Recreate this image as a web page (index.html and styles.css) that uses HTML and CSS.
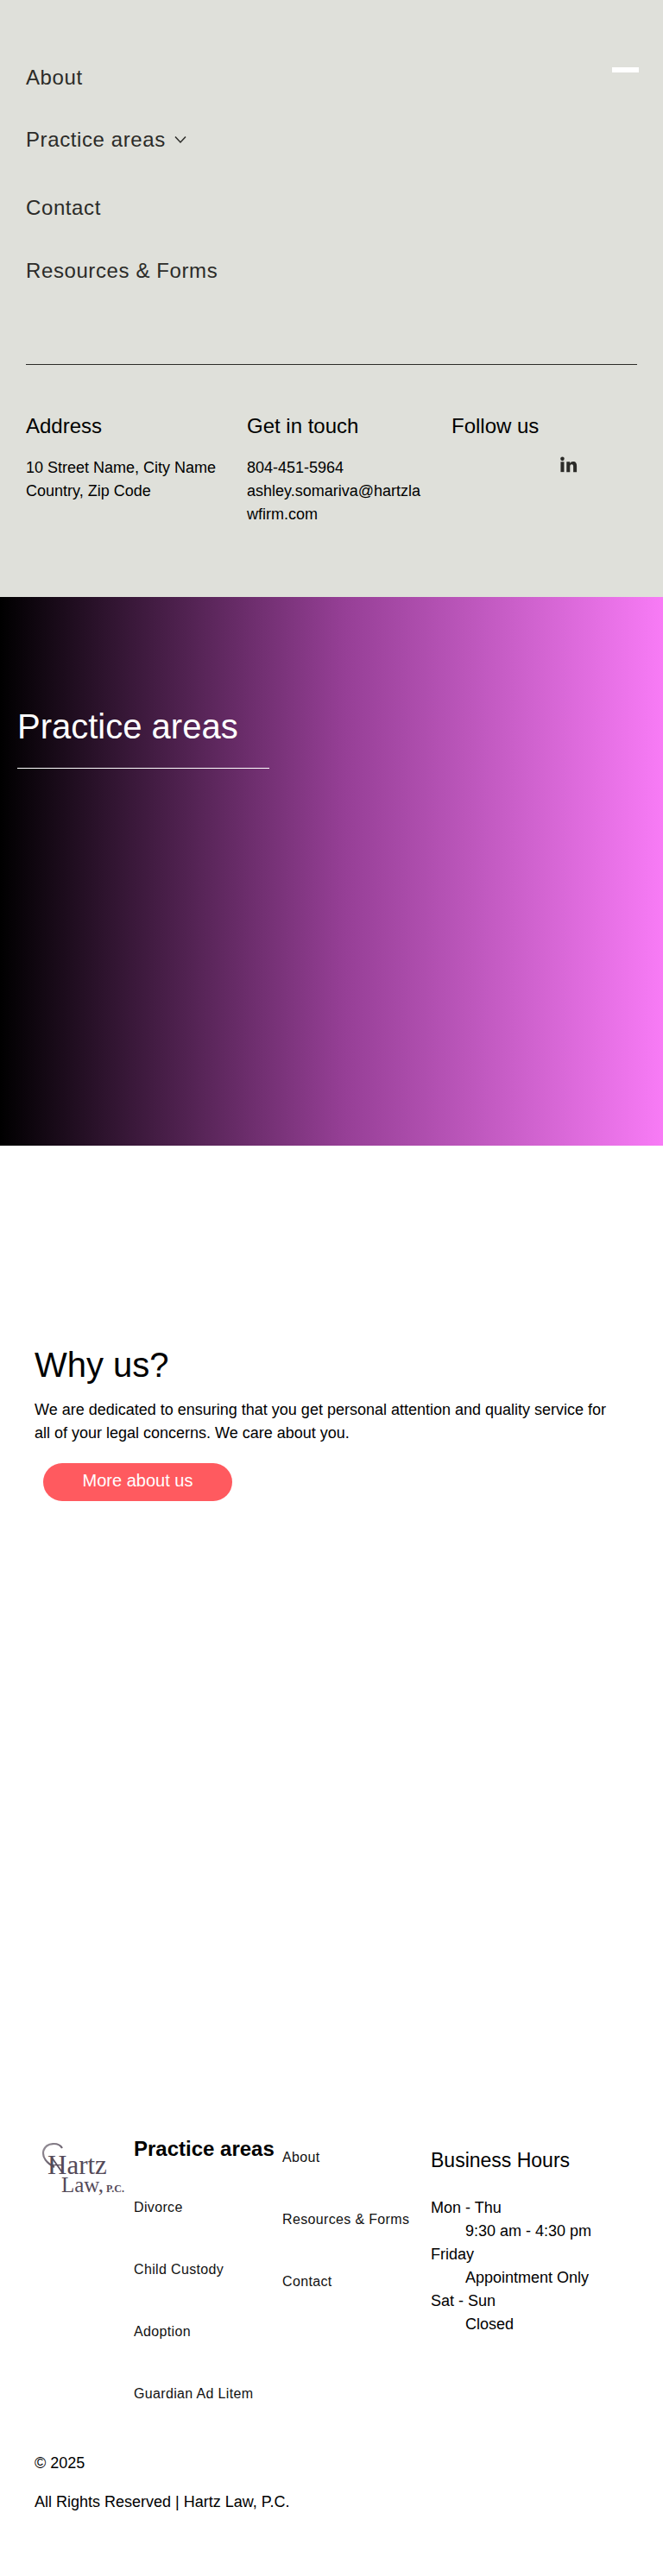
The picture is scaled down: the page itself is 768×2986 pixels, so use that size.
FILE: index.html

```html
<!DOCTYPE html>
<html lang="en">
<head>
<meta charset="UTF-8">
<meta name="viewport" content="width=device-width, initial-scale=1.0">
<title>Hartz Law, P.C.</title>
<link rel="stylesheet" href="styles.css">
</head>
<body>

<section class="menu">
    <div class="menu-close"></div>
    <nav class="menu-links">
        <a class="menu-link" href="#">About</a>
        <a class="menu-link menu-link-sub" href="#">Practice areas
            <svg class="chevron" width="14" height="10" viewBox="0 0 14 10"><path d="M1 1.500 7 8l6-6.500" fill="none" stroke="#2b2b28" stroke-width="1.500"/></svg>
        </a>
        <a class="menu-link" href="#">Contact</a>
        <a class="menu-link" href="#">Resources &amp; Forms</a>
    </nav>
    <div class="menu-info">
        <div class="info-col info-address">
            <h3>Address</h3>
            <p>10 Street Name, City Name<br>Country, Zip Code</p>
        </div>
        <div class="info-col info-touch">
            <h3>Get in touch</h3>
            <p>804-451-5964<br>ashley.somariva@hartzlawfirm.com</p>
        </div>
        <div class="info-col">
            <h3>Follow us</h3>
            <div class="social">
                <svg width="20" height="19" viewBox="0 0 22 20"><circle cx="2.700" cy="2.700" r="2.500" fill="#2b2b28"/><rect x="0.500" y="6.500" width="4.400" height="13" fill="#2b2b28"/><path d="M8 6.500h4.200v1.900c.8-1.400 2.300-2.200 4.100-2.200 3.600 0 4.700 2.300 4.700 5.700v7.600h-4.400v-6.800c0-1.700-.4-2.900-2-2.900-1.700 0-2.200 1.300-2.200 3v6.700H8z" fill="#2b2b28"/></svg>
            </div>
        </div>
    </div>
</section>

<section class="hero">
    <h1>Practice areas</h1>
    <div class="hero-rule"></div>
</section>

<section class="why">
    <h2>Why us?</h2>
    <p>We are dedicated to ensuring that you get personal attention and quality service for all of your legal concerns. We care about you.</p>
    <a class="btn" href="#">More about us</a>
</section>

<footer class="footer">
    <div class="footer-top">
        <svg class="logo" width="100" height="66" viewBox="0 0 100 66">
            <defs>
                <linearGradient id="logoInk" x1="0" y1="0" x2="1" y2="1">
                    <stop offset="0" stop-color="#9a949c"/>
                    <stop offset="1" stop-color="#4a3f50"/>
                </linearGradient>
            </defs>
            <path d="M24 7C20 0 6 0 2.500 9.500 0 18 7 25 15 29" fill="none" stroke="url(#logoInk)" stroke-width="2.200"/>
            <path d="M12 18 24 35" fill="none" stroke="#5a4f60" stroke-width="1.800"/>
            <text class="logo-big" x="7" y="37">Hartz</text>
            <text class="logo-law" x="23" y="58">Law,</text>
            <text class="logo-small" x="75" y="58">P.C.</text>
        </svg>
        <div class="foot-col foot-areas">
            <h4>Practice areas</h4>
            <a href="#">Divorce</a>
            <a href="#">Child Custody</a>
            <a href="#">Adoption</a>
            <a href="#">Guardian Ad Litem</a>
        </div>
        <div class="foot-col foot-pages">
            <a href="#">About</a>
            <a href="#">Resources &amp; Forms</a>
            <a href="#">Contact</a>
        </div>
        <div class="hours">
            <h5>Business Hours</h5>
            <div>Mon - Thu</div>
            <div class="indent">9:30 am - 4:30 pm</div>
            <div>Friday</div>
            <div class="indent">Appointment Only</div>
            <div>Sat - Sun</div>
            <div class="indent">Closed</div>
        </div>
    </div>
    <p class="copy">© 2025</p>
    <p class="copy">All Rights Reserved | Hartz Law, P.C.</p>
</footer>

</body>
</html>
```

FILE: styles.css

```css
* {
    box-sizing: border-box;
}

body {
    margin: 0;
    font-family: "Liberation Sans", Arial, sans-serif;
    color: #000;
    background-color: #fff;
}

a {
    color: inherit;
    text-decoration: none;
}

.menu {
    position: relative;
    height: 692px;
    padding: 72px 30px 0;
    background-color: #dfe0da;
}

.menu-close {
    position: absolute;
    top: 78px;
    left: 709px;
    width: 31px;
    height: 6px;
    background-color: #fff;
}

.menu-links {
    display: flex;
    flex-direction: column;
    height: 351px;
    border-bottom: 1px solid #2b2b28;
}

.menu-link {
    display: flex;
    align-items: center;
    gap: 10px;
    height: 36px;
    margin-bottom: 36px;
    font-size: 24px;
    line-height: 36px;
    letter-spacing: 0.6px;
    color: #2b2b28;
}

.menu-link-sub {
    margin-bottom: 43px;
}

.menu-link-sub + .menu-link {
    margin-bottom: 37px;
}

.menu-info {
    display: flex;
    padding-top: 55px;
}

.info-col {
    flex: 1;
}

.info-address {
    flex: none;
    width: 256px;
}

.info-touch {
    flex: none;
    width: 237px;
    padding-right: 30px;
    overflow-wrap: anywhere;
}

.info-col h3 {
    margin: 0 0 19px;
    font-size: 24px;
    font-weight: 400;
    line-height: 32px;
}

.info-col p {
    margin: 0;
    font-size: 18px;
    line-height: 27px;
}

.social {
    padding-left: 126px;
}

.hero {
    height: 636px;
    padding: 120px 20px 0;
    background: linear-gradient(to right, #000, #963f96 52%, #f87bf6);
    color: #fff;
}

.hero h1 {
    margin: 0;
    font-size: 40px;
    font-weight: 400;
    line-height: 60px;
}

.hero-rule {
    width: 292px;
    height: 1px;
    margin-top: 18px;
    background-color: #fff;
}

.why {
    height: 1104px;
    padding: 229px 40px 0;
}

.why h2 {
    margin: 0 0 14px;
    font-size: 40px;
    font-weight: 400;
    line-height: 50px;
}

.why p {
    max-width: 670px;
    margin: 0 0 21px;
    font-size: 18px;
    line-height: 27px;
}

.btn {
    display: block;
    width: 219px;
    height: 44px;
    margin-left: 10px;
    border-radius: 22px;
    background-color: #ff5a5f;
    color: #fff;
    font-size: 20px;
    line-height: 40px;
    text-align: center;
}

.footer {
    padding: 45px 40px 54px;
}

.footer-top {
    display: flex;
    align-items: flex-start;
    margin-bottom: 5px;
}

.logo {
    flex: none;
    margin: 6px 7px 0 8px;
}

.logo-big {
    font-family: "Liberation Serif", serif;
    font-size: 31px;
    fill: #544a59;
}

.logo-law {
    font-family: "Liberation Serif", serif;
    font-size: 25px;
    fill: #544a59;
}

.logo-small {
    font-family: "Liberation Serif", serif;
    font-size: 12px;
    font-weight: 700;
    fill: #544a59;
}

.foot-col {
    display: flex;
    flex-direction: column;
    font-size: 16px;
    letter-spacing: 0.35px;
    color: #111;
}

.foot-col a {
    height: 72px;
    line-height: 20px;
}

.foot-col h4 {
    margin: 0 0 44px;
    font-size: 24px;
    font-weight: 700;
    letter-spacing: 0;
    line-height: 28px;
    color: #000;
}

.foot-areas {
    flex: none;
    width: 172px;
}

.foot-pages {
    flex: none;
    width: 172px;
    padding-top: 14px;
}

.hours {
    font-size: 18px;
    line-height: 27px;
}

.hours h5 {
    margin: 13px 0 28px;
    font-size: 23px;
    font-weight: 400;
    line-height: 28px;
}

.indent {
    padding-left: 40px;
}

.copy {
    margin: 0 0 18px;
    font-size: 18px;
    line-height: 27px;
}
```
